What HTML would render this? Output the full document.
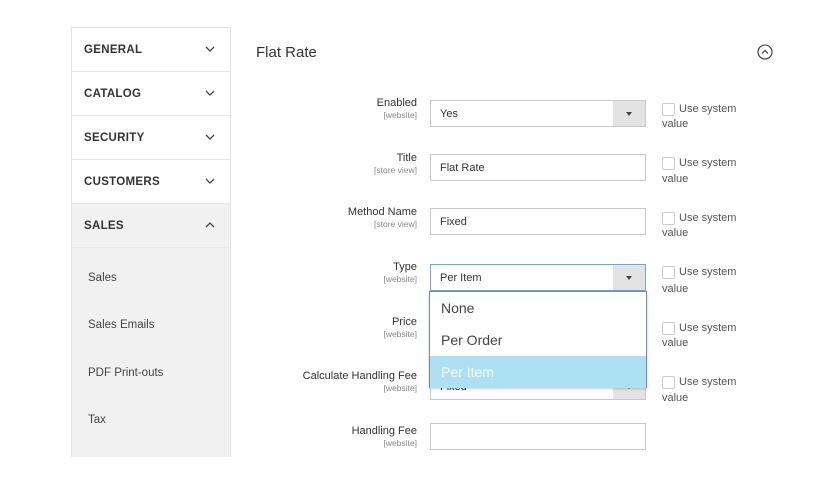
<!DOCTYPE html>
<html><head><style>
*{box-sizing:border-box;margin:0;padding:0}
body{width:837px;height:483px;background:#fff;font-family:"Liberation Sans",sans-serif;color:#333;position:relative;overflow:hidden}
.side{position:absolute;left:71px;top:27px;width:160px;height:430px;border:1px solid #e3e3e3;border-bottom:none;background:#fff}
.it{height:44px;border-bottom:1px solid #e8e8e8;font-weight:bold;font-size:11.5px;letter-spacing:.3px;padding-left:12px;line-height:44px;position:relative;color:#333}
.it svg{position:absolute;right:15px;top:18px}
.sub{background:#f1f1f1;position:absolute;top:220px;left:0;right:0;bottom:0}
.sub div{position:absolute;left:16px;font-size:11.5px;color:#444}
h2{position:absolute;left:256px;top:44px;font-size:15px;font-weight:normal;color:#333}
.lb{position:absolute;right:420px;text-align:right;font-size:11px;color:#333;line-height:13px}
.lb small{display:block;font-size:8.5px;color:#888;line-height:10px}
.in{position:absolute;left:430px;width:216px;height:27px;border:1px solid #c8c8c8;font-size:11px;padding-left:9px;line-height:27px;background:#fff;color:#333}
.in .ar{position:absolute;right:0;top:0;width:32px;height:25px;background:#e3e3e3}
.in .ar:after{content:"";position:absolute;left:13px;top:11px;border:3.5px solid transparent;border-top:4px solid #444}
.cb{position:absolute;left:662px;width:13px;height:13px;border:1px solid #ccc;border-radius:2px}
.us{position:absolute;left:679px;font-size:11px;color:#555}
.va{position:absolute;left:662px;font-size:11px;color:#555}
.dd{position:absolute;left:429px;top:291px;width:218px;height:97px;border:1px solid #7a8a99;background:#fff;box-shadow:0 1px 3px rgba(0,0,0,.2)}
.dd div{height:32px;line-height:33px;padding-left:11px;font-size:14px;color:#444}
</style></head><body>
<div class="side">
<div class="it">GENERAL<svg width="10" height="6"><path d="M1 1l4 4 4-4" stroke="#444" fill="none" stroke-width="1.3"/></svg></div>
<div class="it">CATALOG<svg width="10" height="6"><path d="M1 1l4 4 4-4" stroke="#444" fill="none" stroke-width="1.3"/></svg></div>
<div class="it">SECURITY<svg width="10" height="6"><path d="M1 1l4 4 4-4" stroke="#444" fill="none" stroke-width="1.3"/></svg></div>
<div class="it">CUSTOMERS<svg width="10" height="6"><path d="M1 1l4 4 4-4" stroke="#444" fill="none" stroke-width="1.3"/></svg></div>
<div class="it" style="background:#f1f1f1">SALES<svg width="10" height="6"><path d="M1 5l4-4 4 4" stroke="#444" fill="none" stroke-width="1.3"/></svg></div>
<div class="sub"><div style="top:24px">Sales</div><div style="top:71px">Sales Emails</div><div style="top:119px">PDF Print-outs</div><div style="top:166px">Tax</div></div>
</div>
<h2>Flat Rate</h2>
<svg style="position:absolute;left:757px;top:44px" width="16" height="16"><circle cx="8" cy="8" r="7" fill="none" stroke="#333" stroke-width="1.1"/><path d="M5 9.5l3-3 3 3" stroke="#333" fill="none" stroke-width="1.1"/></svg>

<div class="lb" style="top:97px">Enabled<small>[website]</small></div>
<div class="in" style="top:100px">Yes<div class="ar"></div></div>
<div class="cb" style="top:103px"></div><div class="us" style="top:103px">Use system</div><div class="va" style="top:118px">value</div>

<div class="lb" style="top:152px">Title<small>[store view]</small></div>
<div class="in" style="top:154px">Flat Rate</div>
<div class="cb" style="top:157px"></div><div class="us" style="top:157px">Use system</div><div class="va" style="top:173px">value</div>

<div class="lb" style="top:206px">Method Name<small>[store view]</small></div>
<div class="in" style="top:208px">Fixed</div>
<div class="cb" style="top:212px"></div><div class="us" style="top:212px">Use system</div><div class="va" style="top:227px">value</div>

<div class="lb" style="top:261px">Type<small>[website]</small></div>
<div class="in" style="top:264px;border-color:#7aa7c7">Per Item<div class="ar"></div></div>
<div class="cb" style="top:266px"></div><div class="us" style="top:266px">Use system</div><div class="va" style="top:283px">value</div>

<div class="lb" style="top:316px">Price<small>[website]</small></div>
<div class="cb" style="top:322px"></div><div class="us" style="top:322px">Use system</div><div class="va" style="top:337px">value</div>

<div class="lb" style="top:370px">Calculate Handling Fee<small>[website]</small></div>
<div class="in" style="top:373px">Fixed<div class="ar"></div></div>
<div class="cb" style="top:376px"></div><div class="us" style="top:376px">Use system</div><div class="va" style="top:392px">value</div>

<div class="lb" style="top:425px">Handling Fee<small>[website]</small></div>
<div class="in" style="top:423px"></div>

<div class="dd"><div>None</div><div>Per Order</div><div style="background:#aee0f3;color:#f4fbff">Per Item</div></div>
</body></html>
